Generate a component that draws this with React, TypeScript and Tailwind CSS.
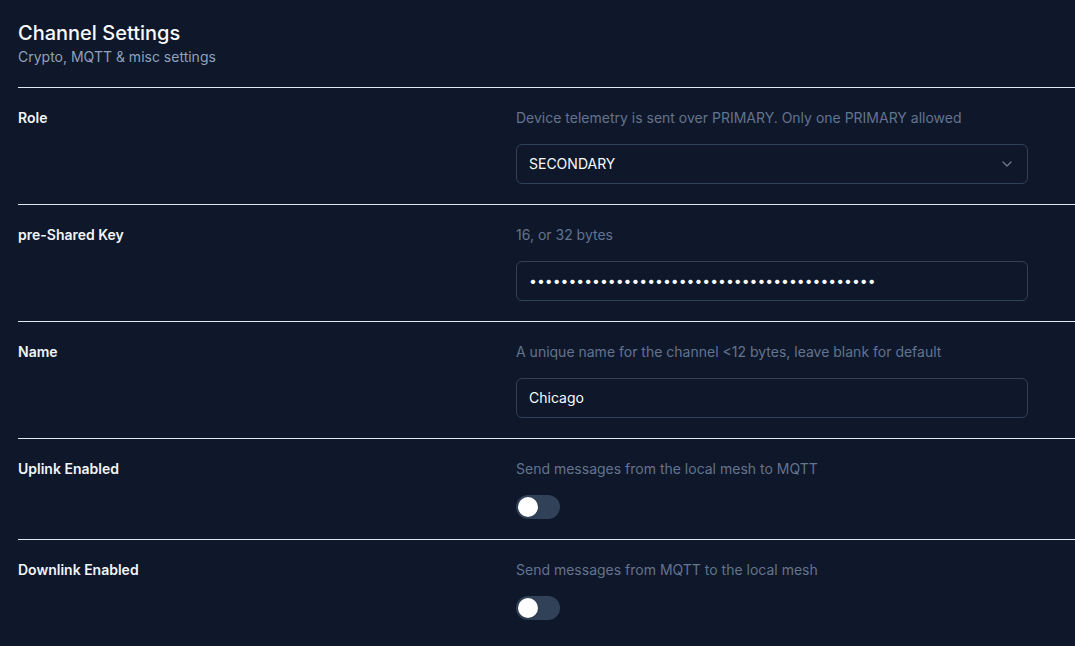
import { ChevronDown } from "lucide-react";
import type { ReactNode } from "react";

function Row({
  label,
  description,
  children,
}: {
  label: string;
  description: string;
  children: ReactNode;
}) {
  return (
    <div className="grid grid-cols-[498px_1fr] border-t border-[#e2e8f0] pt-5 pb-5">
      <div className="text-sm leading-5 font-semibold text-slate-100">{label}</div>
      <div className="flex flex-col gap-4">
        <p className="text-sm leading-5 text-slate-500">{description}</p>
        {children}
      </div>
    </div>
  );
}

function Toggle() {
  return (
    <div className="flex h-6 w-11 items-center rounded-full bg-slate-700 px-0.5">
      <div className="h-5 w-5 rounded-full bg-white shadow" />
    </div>
  );
}

export default function App() {
  return (
    <div
      className="min-h-screen bg-[#0f172a] pl-[18px] pt-[19px] text-white"
      style={{ fontFamily: "Inter, 'Noto Sans', sans-serif" }}
    >
      <div className="pb-5">
        <h1 className="text-xl leading-7 font-medium text-slate-50">Channel Settings</h1>
        <p className="text-sm leading-5 text-slate-400">Crypto, MQTT &amp; misc settings</p>
      </div>

      <Row label="Role" description="Device telemetry is sent over PRIMARY. Only one PRIMARY allowed">
        <div className="flex h-10 w-[512px] items-center justify-between rounded-md border border-slate-700 px-3 text-sm text-slate-50">
          <span>SECONDARY</span>
          <ChevronDown className="h-4 w-4 text-slate-400 opacity-70" />
        </div>
      </Row>

      <Row label="pre-Shared Key" description="16, or 32 bytes">
        <div className="flex h-10 w-[512px] items-center rounded-md border border-slate-700 px-3 text-sm text-slate-50">
          <span>{"•".repeat(44)}</span>
        </div>
      </Row>

      <Row label="Name" description="A unique name for the channel <12 bytes, leave blank for default">
        <div className="flex h-10 w-[512px] items-center rounded-md border border-slate-700 px-3 text-sm text-slate-50">
          <span>Chicago</span>
        </div>
      </Row>

      <Row label="Uplink Enabled" description="Send messages from the local mesh to MQTT">
        <Toggle />
      </Row>

      <Row label="Downlink Enabled" description="Send messages from MQTT to the local mesh">
        <Toggle />
      </Row>
    </div>
  );
}
